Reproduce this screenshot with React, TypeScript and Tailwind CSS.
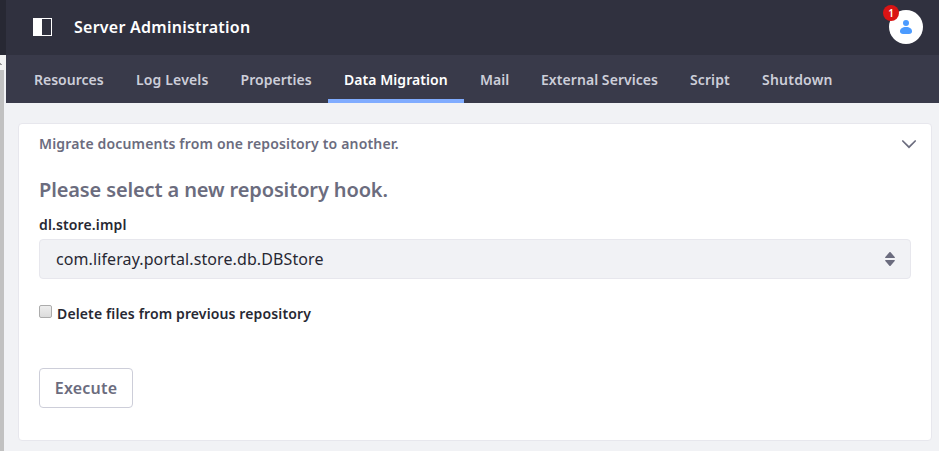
const tabs = [
  { label: "Resources", width: "w-[102px]" },
  { label: "Log Levels", width: "w-[104px]", tracking: "tracking-[0.15px]" },
  { label: "Properties", width: "w-[104px]", tracking: "tracking-[0.05px] pl-[16.5px]" },
  { label: "Data Migration", width: "w-[136px]", active: true, tracking: "tracking-[0.06px]" },
  { label: "Mail", width: "w-[61px]" },
  { label: "External Services", width: "w-[149px]", tracking: "tracking-[0.06px]" },
  { label: "Script", width: "w-[72px]", tracking: "tracking-[0.1px]" },
  { label: "Shutdown", width: "w-[103px]", tracking: "tracking-[0.22px]" },
];

function MenuEdge() {
  return (
    <div className="flex w-[6px] shrink-0 flex-col bg-[#f1f2f5]">
      <div className="h-[55px] bg-[#272833]" />
      <div className="flex h-[15px] items-center bg-[#f2f2f2]">
        <svg className="h-[15px] w-[4px]" viewBox="0 0 4 15" shapeRendering="crispEdges">
          <path d="M0 8h1v1h1v1H0z" fill="#999" />
        </svg>
      </div>
      <div className="w-[4px] grow bg-[#c1c1c1]" />
    </div>
  );
}

function ControlBar() {
  return (
    <header className="flex h-[55px] items-center bg-[#30313f] pb-px pl-[27px] pr-4">
      <svg width="19" height="18" viewBox="0 0 19 18" shapeRendering="crispEdges">
        <rect x=".5" y=".5" width="18" height="17" fill="none" stroke="#fff" />
        <path d="M0 0h9v18H0z" fill="#fff" />
      </svg>
      <h1 className="ml-[22px] text-[16px] leading-6 font-semibold tracking-[0.25px] text-white">Server Administration</h1>
      <div className="relative ml-auto flex size-[34px] items-center justify-center rounded-full bg-white">
        <svg width="12" height="14" viewBox="0 0 12 14" fill="#4b9bff">
          <circle cx="6" cy="3" r="3" />
          <path d="M0 11.3C0 8.7 2.3 7 6 7s6 1.700 6 4.300C12 13.200 10.800 14 9 14H3c-1.800 0-3-.8-3-2.700z" />
        </svg>
        <span className="absolute -left-[6px] -top-[5px] flex size-4 items-center justify-center rounded-full bg-[#da1414] pb-px text-[10px] leading-none font-semibold text-white">
          1
        </span>
      </div>
    </header>
  );
}

function Tabs() {
  return (
    <nav className="flex h-12 bg-[#393a4a] pl-3 text-[14px] font-semibold">
      {tabs.map((tab) => (
        <a
          key={tab.label}
          className={`${tab.width} ${tab.tracking ?? ""} shrink-0 border-b-4 pl-4 pt-[14px] leading-[21px] whitespace-nowrap ${
            tab.active ? "border-[#80acff] text-white" : "border-transparent text-[#cdced9]"
          }`}
        >
          {tab.label}
        </a>
      ))}
    </nav>
  );
}

export default function App() {
  return (
    <div className="flex h-[451px] w-[939px] overflow-hidden bg-[#f1f2f5] font-['Noto_Sans',sans-serif] text-[#272833]">
      <MenuEdge />
      <div className="flex min-w-0 grow flex-col">
        <ControlBar />
        <Tabs />
        <main className="ml-3 mr-[7px] mt-5 h-[318px] rounded-[4px] border border-[#e7e7ed] bg-white px-5">
          <div className="-mr-[6px] flex h-[40px] items-center justify-between pb-px text-[#6b6c7e]">
            <h2 className="text-[14px] leading-[21px] font-semibold tracking-[0.165px]">Migrate documents from one repository to another.</h2>
            <svg width="16" height="16" viewBox="0 0 16 16" fill="none" stroke="currentColor" strokeWidth="1.7" strokeLinecap="round">
              <path d="m1.800 5 6.200 6.200L14.200 5" />
            </svg>
          </div>
          <h3 className="mt-[11px] text-[20px] leading-[30px] font-semibold tracking-[-0.13px] text-[#6b6c7e]">Please select a new repository hook.</h3>
          <div className="mt-[9px] text-[14px] leading-[21px] font-semibold tracking-[0.13px]">dl.store.impl</div>
          <div className="mt-1 flex h-10 items-center justify-between rounded-[4px] border border-[#e7e7ed] bg-[#f1f2f5] pl-4 pr-[15px] text-[16px] tracking-[0.1px]">
            com.liferay.portal.store.db.DBStore
            <svg width="10" height="14" viewBox="0 0 10 14" fill="#6b6c7e">
              <path d="M.7 6h8.600c.6 0 .8-.6.400-1L5.600.3a.8.8 0 0 0-1.200 0L.3 5c-.4.400-.2 1 .4 1zM.7 8h8.600c.6 0 .8.600.4 1l-4.100 4.700a.8.8 0 0 1-1.200 0L.3 9c-.4-.4-.2-1 .4-1z" />
            </svg>
          </div>
          <label className="mt-[24px] flex h-[21px] text-[14px] leading-[21px] font-semibold tracking-[0.13px]">
            <input type="checkbox" className="mr-[5px] mt-[2px] size-[13px] appearance-none rounded-[2px] border border-[#acacac] bg-linear-to-b from-[#eee] to-[#dcdcdc]" />
            Delete files from previous repository
          </label>
          <button className="mt-[44px] flex h-10 w-[94px] items-center justify-center rounded-[4px] border border-[#cdced9] bg-white text-[16px] font-semibold tracking-[0.2px] text-[#6b6c7e]">
            Execute
          </button>
        </main>
      </div>
    </div>
  );
}
